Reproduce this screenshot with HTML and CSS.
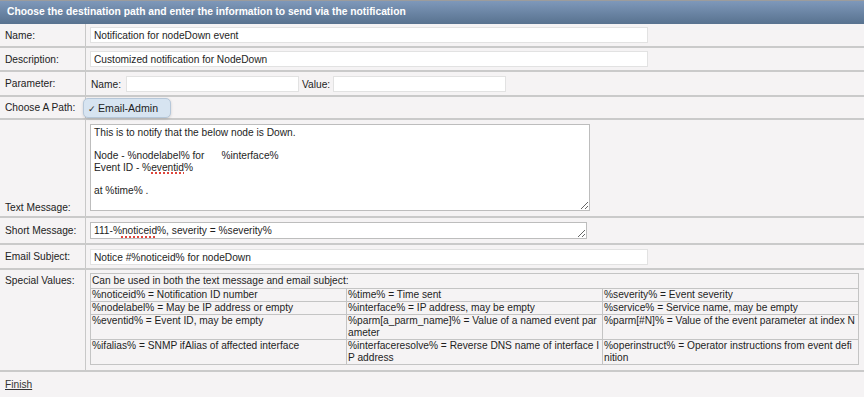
FILE: index.html
```html
<!DOCTYPE html>
<html lang="en">
<head>
    <meta charset="UTF-8">
    <title>Choose Path - Notification</title>
    <link rel="stylesheet" href="styles.css">
</head>
<body>
    <div class="title">Choose the destination path and enter the information to send via the notification</div>

    <div class="row">
        <div class="label">Name:</div>
        <div class="field"><input class="text wide" type="text" value="Notification for nodeDown event"></div>
    </div>
    <div class="row">
        <div class="label">Description:</div>
        <div class="field"><input class="text wide" type="text" value="Customized notification for NodeDown"></div>
    </div>
    <div class="row param">
        <div class="label">Parameter:</div>
        <div class="field inline">
            <span>Name:</span><input class="text short" type="text">
            <span class="value-label">Value:</span><input class="text short" type="text">
        </div>
    </div>
    <div class="row path">
        <div class="label">Choose A Path:</div>
        <div class="field"></div>
        <div class="popup"><span class="check">✓</span>Email-Admin</div>
    </div>
    <div class="row message">
        <div class="label bottom">Text Message:</div>
        <div class="field">
            <div class="textbox big">This is to notify that the below node is Down.

Node - %nodelabel% for      %interface%
Event ID - %<span class="typo">eventid</span>%

at %time% .</div>
        </div>
    </div>
    <div class="row shortmsg">
        <div class="label">Short Message:</div>
        <div class="field">
            <div class="textbox small">111-%<span class="typo">noticeid</span>%, severity = %severity%</div>
        </div>
    </div>
    <div class="row subject">
        <div class="label">Email Subject:</div>
        <div class="field"><input class="text wide" type="text" value="Notice #%noticeid% for nodeDown"></div>
    </div>
    <div class="row special">
        <div class="label top">Special Values:</div>
        <div class="field">
            <table class="values">
                <tr><td colspan="3" class="caption">Can be used in both the text message and email subject:</td></tr>
                <tr>
                    <td>%noticeid% = Notification ID number</td>
                    <td>%time% = Time sent</td>
                    <td>%severity% = Event severity</td>
                </tr>
                <tr>
                    <td>%nodelabel% = May be IP address or empty</td>
                    <td>%interface% = IP address, may be empty</td>
                    <td>%service% = Service name, may be empty</td>
                </tr>
                <tr>
                    <td>%eventid% = Event ID, may be empty</td>
                    <td>%parm[a_parm_name]% = Value of a named event parameter</td>
                    <td>%parm[#N]% = Value of the event parameter at index N</td>
                </tr>
                <tr>
                    <td>%ifalias% = SNMP ifAlias of affected interface</td>
                    <td>%interfaceresolve% = Reverse DNS name of interface IP address</td>
                    <td>%operinstruct% = Operator instructions from event definition</td>
                </tr>
            </table>
        </div>
    </div>
    <div class="finish"><a href="#">Finish</a></div>
</body>
</html>
```

FILE: styles.css
```css
body {
    margin: 0;
    background: #f5f3f4;
    font-family: "Liberation Sans", Arial, sans-serif;
    font-size: 10.2px;
    color: #1e1e1e;
}
.title {
    height: 23px;
    line-height: 22px;
    padding-left: 7px;
    border-top: 1px solid #9c9c9c;
    background: linear-gradient(#7e98ba, #58728f);
    color: white;
    font-size: 10.3px;
    font-weight: bold;
}
.row {
    display: flex;
    position: relative;
    border-bottom: 2px solid #cacaca;
}
.label {
    width: 86px;
    flex: none;
    box-sizing: border-box;
    padding-left: 5px;
    border-right: 1px solid #c8c8c8;
    display: flex;
    align-items: center;
    color: #222;
}
.label.bottom { align-items: flex-end; padding-bottom: 3px; }
.label.top { align-items: flex-start; padding-top: 5px; }
.field {
    flex: 1;
    padding: 3px 5px 3px 4px;
    min-height: 16px;
}
.text {
    box-sizing: border-box;
    height: 16px;
    margin: 0;
    padding: 0 3px;
    border: 1px solid #e2e2e2;
    background: white;
    font: inherit;
    color: #1e1e1e;
    outline: none;
    display: block;
}
.wide { width: 558px; }
.short { width: 173px; }
.param .field { padding-top: 4px; }
.inline {
    display: flex;
    align-items: center;
}
.inline span { margin-left: 1px; margin-right: 5px; }
.inline .value-label { margin-left: 3px; margin-right: 3px; }
.path .field { min-height: 21px; padding: 0; }
.popup {
    position: absolute;
    left: 83px;
    top: 1px;
    width: 88px;
    height: 20px;
    box-sizing: border-box;
    padding-left: 4px;
    line-height: 18px;
    border: 1px solid #b6c7d9;
    border-radius: 5px;
    background: #d7e4f1;
    box-shadow: 0 1px 3px rgba(0, 0, 0, 0.15);
    color: #222;
    font-size: 10.6px;
}
.check { margin-right: 2px; font-size: 9px; }
.textbox {
    box-sizing: border-box;
    padding: 2px 3px;
    border: 1px solid #bdbdbd;
    background: white;
    white-space: pre;
    line-height: 11.5px;
    overflow: hidden;
    resize: both;
}
.textbox.big { width: 500px; height: 87px; }
.textbox.small { width: 497px; height: 17px; padding-top: 2px; }
.message .field { padding-top: 4px; padding-bottom: 5px; }
.shortmsg .field { padding-top: 4px; padding-bottom: 4px; }
.subject .field { padding-top: 4px; }
.typo {
    text-decoration: underline dotted #e0453b;
    text-decoration-thickness: 2px;
    text-underline-offset: 2px;
}
.special .field { padding-bottom: 5px; }
.values {
    width: 100%;
    border-collapse: collapse;
    border: 1px solid #c0c0c0;
    table-layout: fixed;
}
.values td {
    border: 1px solid #c4c4c4;
    padding: 0 1px;
    line-height: 12px;
    vertical-align: top;
    word-break: break-all;
}
.values td.caption { padding-top: 1px; padding-bottom: 1px; }
.finish {
    height: 25px;
    line-height: 26px;
    padding-left: 5px;
    border-bottom: 2px solid #a8a8a8;
}
.finish a { color: #333; }
```
